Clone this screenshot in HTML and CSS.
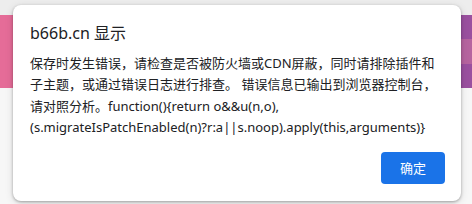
FILE: index.html
```html
<!DOCTYPE html>
<html lang="zh-CN">

<head>
  <meta charset="UTF-8">
  <meta name="viewport" content="width=device-width, initial-scale=1.0">
  <title>b66b.cn</title>
  <link rel="stylesheet" href="styles.css">
</head>

<body>
  <div class="page">
    <div class="topbar"></div>
    <div class="banner">
      <div class="bannerLeft"></div>
      <div class="bannerMid"></div>
      <div class="bannerRight">
        <div class="stripe"></div>
        <div class="stripe light"></div>
        <div class="stripe"></div>
      </div>
    </div>
    <div class="rest"></div>
  </div>

  <div class="dialog">
    <div class="dialogTitle">b66b.cn 显示</div>
    <div class="dialogMsg">保存时发生错误，请检查是否被防火墙或CDN屏蔽，同时请排除插件和子主题，或通过错误日志进行排查。 错误信息已输出到浏览器控制台，请对照分析。function(){return o&amp;&amp;u(n,o),(s.migrateIsPatchEnabled(n)?r:a||s.noop).apply(this,arguments)}</div>
    <div class="dialogFoot">
      <div class="button">确定</div>
    </div>
  </div>
</body>

</html>
```

FILE: styles.css
```css
html,
body {
  margin: 0;
  padding: 0;
}

body {
  width: 472px;
  height: 204px;
  overflow: hidden;
  background-color: #f6f6f6;
  font-family: "Noto Sans", "Noto Sans CJK SC", sans-serif;
}

.page {
  display: flex;
  flex-direction: column;
  height: 100%;
}

.topbar {
  height: 15px;
  background-color: #ededed;
}

.banner {
  display: flex;
  height: 73px;
}

.bannerLeft {
  width: 14px;
  background-color: #e56c98;
}

.bannerMid {
  flex: 1;
  background-color: #eee;
}

.bannerRight {
  width: 12px;
  display: flex;
  flex-direction: column;
}

.bannerRight .stripe {
  flex: 23;
  background-color: #9a509f;
}

.bannerRight .stripe.light {
  flex: 25;
  background-color: #b6649f;
}

.rest {
  flex: 1;
  background-color: #f7f7f7;
}

.dialog {
  position: absolute;
  left: 13px;
  top: 5px;
  width: 448px;
  height: 196px;
  box-sizing: border-box;
  padding: 17px 16px 17px 17px;
  background-color: #fff;
  border-radius: 8px;
  box-shadow: 0 1px 3px rgba(0, 0, 0, 0.3), 0 2px 8px rgba(0, 0, 0, 0.12);
  display: flex;
  flex-direction: column;
  color: #202124;
}

.dialogTitle {
  font-size: 16px;
  line-height: 22px;
  margin-bottom: 9px;
}

.dialogMsg {
  font-size: 13px;
  line-height: 21.3px;
  padding-right: 8px;
}

.dialogFoot {
  margin-top: auto;
  display: flex;
  justify-content: flex-end;
}

.button {
  width: 64px;
  height: 32px;
  line-height: 32px;
  text-align: center;
  font-size: 13px;
  color: #fff;
  background-color: #1a73e8;
  border-radius: 4px;
}
```
